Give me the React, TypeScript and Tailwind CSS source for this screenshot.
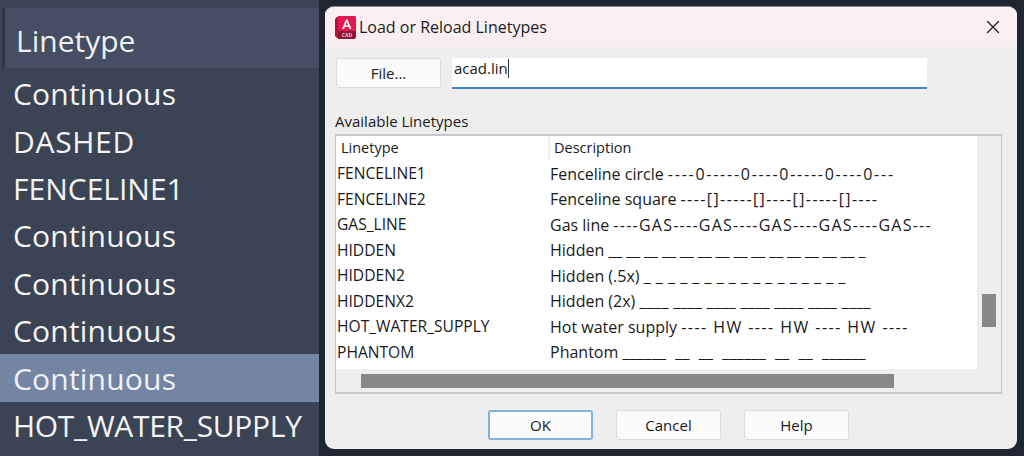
import { X } from "lucide-react";

const sideRows = [
  { name: "Continuous", spacing: "tracking-[0.2px]" },
  { name: "DASHED", spacing: "tracking-[0.7px]" },
  { name: "FENCELINE1", spacing: "" },
  { name: "Continuous", spacing: "tracking-[0.2px]" },
  { name: "Continuous", spacing: "tracking-[0.2px]" },
  { name: "Continuous", spacing: "tracking-[0.2px]" },
  { name: "Continuous", spacing: "tracking-[0.2px]" },
  { name: "HOT_WATER_SUPPLY", spacing: "tracking-[-0.3px]" },
];

const linetypes = [
  { name: "FENCELINE1", label: "Fenceline circle", pattern: "----0-----0----0-----0----0---", spacing: "tracking-[1.75px]" },
  { name: "FENCELINE2", label: "Fenceline square", pattern: "----[]-----[]----[]-----[]----", spacing: "tracking-[1.42px]" },
  { name: "GAS_LINE", label: "Gas line", pattern: "----GAS----GAS----GAS----GAS----GAS---", spacing: "tracking-[1.25px]" },
  { name: "HIDDEN", label: "Hidden", pattern: "__ __ __ __ __ __ __ __ __ __ __ __ __ __ _", spacing: "tracking-[-0.1px]" },
  { name: "HIDDEN2", label: "Hidden (.5x)", pattern: "_ _ _ _ _ _ _ _ _ _ _ _ _ _ _ _ _", spacing: "tracking-[0.5px]" },
  { name: "HIDDENX2", label: "Hidden (2x)", pattern: "____ ____ ____ ____ ____ ____ ____", spacing: "tracking-[0.3px]" },
  { name: "HOT_WATER_SUPPLY", label: "Hot water supply", pattern: "---- HW ---- HW ---- HW ----", spacing: "tracking-[1.45px]" },
  { name: "PHANTOM", label: "Phantom", pattern: "______  __  __  ______  __  __  ______", spacing: "tracking-[0.3px]" },
];

function CadIcon() {
  return (
    <svg width="21" height="23" viewBox="0 0 21 23" className="shrink-0">
      <path d="M0 3 L2 1 H3 V22 H2 L0 20 Z" fill="#b3153f" />
      <path d="M3 0 H19 a2 2 0 0 1 2 2 V21 a2 2 0 0 1 -2 2 H3 Z" fill="#8f1237" />
      <path d="M3 0 H19 a2 2 0 0 1 2 2 V15 H3 Z" fill="#e5194f" />
      <path d="M7 13 L11 3.500 H12.500 L16.500 13 H14.600 L13.700 10.800 H9.900 L9 13 Z M10.500 9.200 H13.100 L11.800 5.900 Z" fill="#ffffff" />
      <text x="12" y="21" textAnchor="middle" fontSize="5" fontWeight="700" fill="#f3c2cf">
        CAD
      </text>
    </svg>
  );
}

function DialogButton({ label, focused }: { label: string; focused?: boolean }) {
  return (
    <button
      className={
        focused
          ? "w-[105px] h-[30px] rounded-[3px] border-2 border-[#7fb2dd] bg-[#fbfbfb] text-[15px] text-[#1a1a1a]"
          : "w-[105px] h-[30px] rounded-[3px] border border-[#dcdcdc] bg-[#fbfbfb] text-[15px] text-[#1a1a1a]"
      }
    >
      {label}
    </button>
  );
}

export default function App() {
  return (
    <div
      className="flex w-[1024px] h-[456px] overflow-hidden bg-[#1f2631]"
      style={{ fontFamily: '"Open Sans", "Noto Sans", sans-serif' }}
    >
      {/* left property list */}
      <div className="w-[319px] h-full shrink-0 bg-[#3b4454] pt-2 text-[#f4f4f4]">
        <div className="h-[60px] flex items-center bg-[#454e62] border-l-[3px] border-[#2f3643] pl-[11px] pt-1 ml-[2px] text-[30px] text-[#eef0f4]">
          Linetype
        </div>
        <div className="pt-[2px]">
          {sideRows.map((row, i) => (
            <div
              key={i}
              className={
                (i === 6
                  ? "h-[47.4px] flex items-center pl-[13px] bg-[#7385a3] text-[30px] text-[#eef1f6] "
                  : "h-[47.4px] flex items-center pl-[13px] text-[30px] ") + row.spacing
              }
            >
              {row.name}
            </div>
          ))}
        </div>
      </div>

      {/* dialog */}
      <div className="w-[692px] h-[443px] ml-[6px] mt-[6px] rounded-[9px] bg-[#eeeeee] overflow-hidden border-t border-[#8a8a8a] flex flex-col">
        <div className="h-[40px] shrink-0 flex items-center bg-[#f9eff2] pl-[10px] pr-[13px]">
          <CadIcon />
          <span className="ml-[3px] text-[16px] text-[#1c1c1c]">Load or Reload Linetypes</span>
          <X className="ml-auto text-[#1c1c1c]" size={22} strokeWidth={1.4} />
        </div>

        <div className="flex pl-[11px] pt-[11px]">
          <button className="w-[105px] h-[30px] rounded-[3px] border border-[#dcdcdc] bg-[#fbfbfb] text-[15px] text-[#1a1a1a]">
            File...
          </button>
          <div className="ml-[11px] w-[475px] h-[31px] bg-white border-b-2 border-[#3f86cf] pl-[2px] text-[15px] leading-[21px] text-[#1a1a1a] flex items-start">
            acad.lin
            <span className="w-px h-[19px] mt-[1px] bg-[#333333]" />
          </div>
        </div>

        <div className="pl-[10px] mt-[22px] text-[15px] leading-[20px] text-[#1a1a1a]">Available Linetypes</div>

        <div className="ml-[10px] mt-[3px] w-[667px] h-[260px] shrink-0 border-t-2 border-x border-b-2 border-[#c8c8cc] flex flex-col">
          <div className="flex flex-1 min-h-0">
            <div className="w-[641px] bg-white">
              <div className="h-[25px] flex text-[14.5px] text-[#1a1a1a] leading-[23px]">
                <div className="w-[214px] pl-[5px] border-r-2 border-[#f0f0f0]">Linetype</div>
                <div className="pl-[4px]">Description</div>
              </div>
              {linetypes.map((row) => (
                <div key={row.name} className="h-[25.5px] flex items-center text-[#1a1a1a] whitespace-pre">
                  <div className="w-[214px] pl-[1px] text-[15.6px]">{row.name}</div>
                  <div className="text-[16px]">
                    {row.label} <span className={row.spacing}>{row.pattern}</span>
                  </div>
                </div>
              ))}
            </div>
            <div className="flex-1 pl-[5px] pt-[158px]">
              <div className="w-[14px] h-[33px] bg-[#888888]" />
            </div>
          </div>
          <div className="h-[23px] shrink-0 pl-[25px] pt-[5px]">
            <div className="w-[533px] h-[14px] bg-[#888888]" />
          </div>
        </div>

        <div className="flex pl-[163px] pt-[16px] gap-[23px]">
          <DialogButton label="OK" focused />
          <DialogButton label="Cancel" />
          <DialogButton label="Help" />
        </div>
      </div>
    </div>
  );
}
